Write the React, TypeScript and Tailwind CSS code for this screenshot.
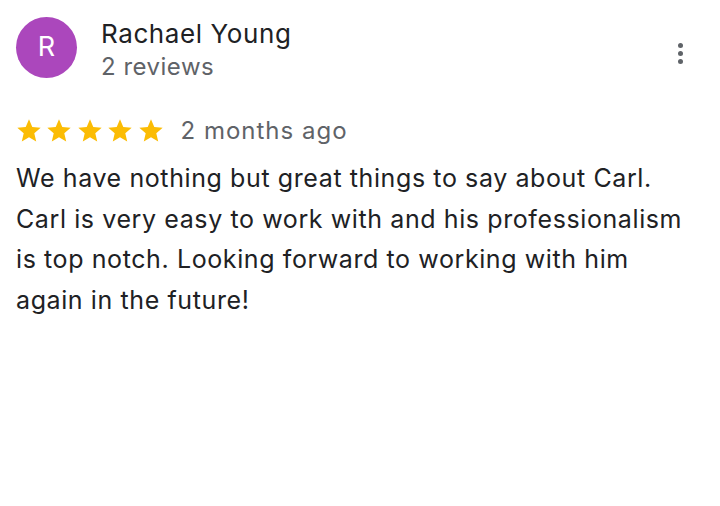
import React from "react";

function Star() {
  return (
    <svg viewBox="0 0 24 24" className="w-[28px] h-[28px]" fill="#fbbc04">
      <path d="M12 17.27L18.18 21l-1.64-7.03L22 9.24l-7.19-.61L12 2 9.19 8.63 2 9.24l5.46 4.73L5.82 21z" />
    </svg>
  );
}

export default function App() {
  return (
    <div
      className="w-[720px] h-[506px] bg-white pl-[16px] pr-[24px] pt-[17px]"
      style={{ fontFamily: "Inter, Roboto, sans-serif" }}
    >
      {/* Header */}
      <div className="flex items-start">
        <div className="w-[61px] h-[61px] rounded-full bg-[#ab47bc] flex items-center justify-center text-white text-[27px] shrink-0">
          R
        </div>
        <div className="ml-[24px] flex-1 flex flex-col -mt-[1px]">
          <div className="text-[26px] leading-[36px] tracking-[0.6px] text-[#202124]">Rachael Young</div>
          <div className="text-[24px] leading-[30px] tracking-[0.5px] text-[#5f6368]">2 reviews</div>
        </div>
        <div className="flex flex-col gap-[3px] items-center pt-[26px] pr-[13px]">
          <span className="w-[5px] h-[5px] rounded-full bg-[#5f6368]" />
          <span className="w-[5px] h-[5px] rounded-full bg-[#5f6368]" />
          <span className="w-[5px] h-[5px] rounded-full bg-[#5f6368]" />
        </div>
      </div>

      {/* Rating */}
      <div className="flex items-center mt-[34px]">
        <div className="flex gap-[2.5px] -ml-[1.5px]">
          <Star />
          <Star />
          <Star />
          <Star />
          <Star />
        </div>
        <span className="ml-[16px] text-[24px] leading-[30px] tracking-[1px] text-[#5f6368]">2 months ago</span>
      </div>

      {/* Body */}
      <div className="mt-[12px] text-[25px] leading-[40.5px] tracking-[0.6px] text-[#202124] whitespace-nowrap">
        <div>We have nothing but great things to say about Carl.</div>
        <div>Carl is very easy to work with and his professionalism</div>
        <div>is top notch. Looking forward to working with him</div>
        <div>again in the future!</div>
      </div>
    </div>
  );
}
